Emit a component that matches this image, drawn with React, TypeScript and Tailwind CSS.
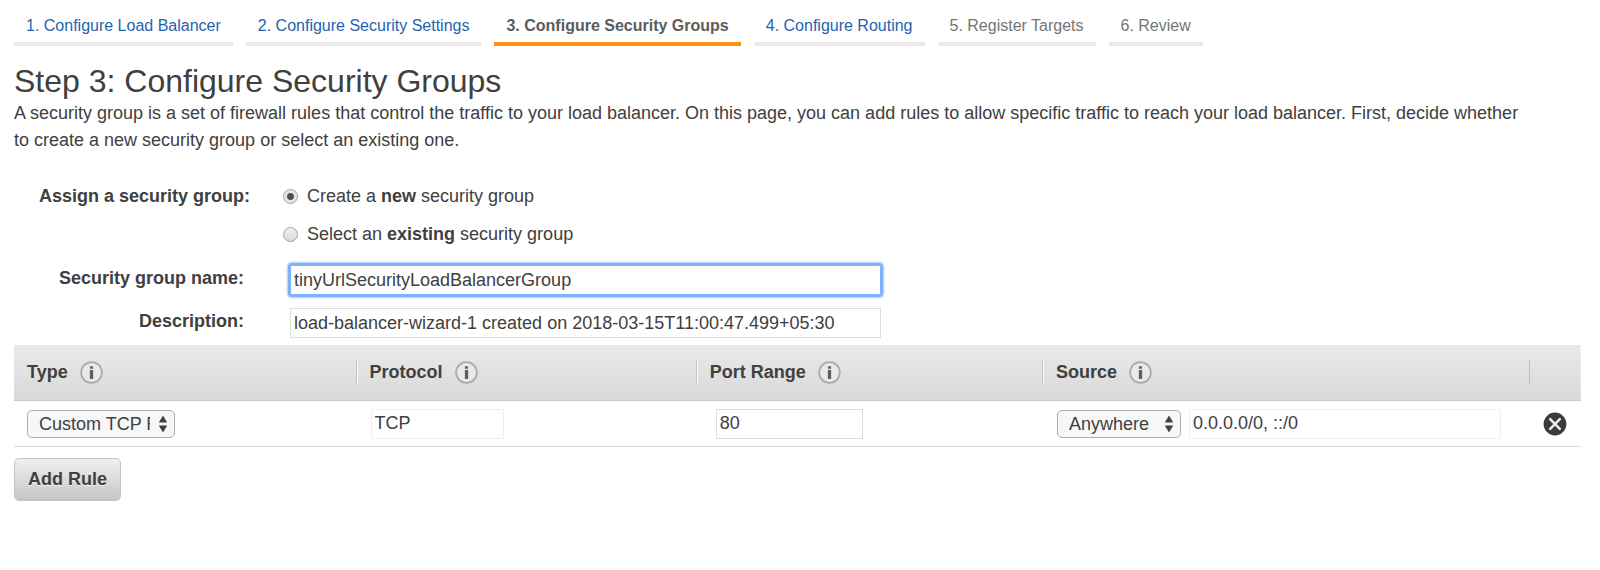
import { useState } from "react";

type Step = { label: string; state: "link" | "current" | "upcoming" };

const steps: Step[] = [
  { label: "1. Configure Load Balancer", state: "link" },
  { label: "2. Configure Security Settings", state: "link" },
  { label: "3. Configure Security Groups", state: "current" },
  { label: "4. Configure Routing", state: "link" },
  { label: "5. Register Targets", state: "upcoming" },
  { label: "6. Review", state: "upcoming" },
];

const stepStyles = {
  link: "border-[#eaeaea] text-[#1f63ad]",
  current: "border-[#ff9118] font-bold text-[#5c5c5c]",
  upcoming: "border-[#eaeaea] text-[#757575]",
};

function StepTab({ label, state }: Step) {
  const className = `border-b-4 px-3 pb-1 leading-6 ${stepStyles[state]}`;
  return (
    <li className="flex">
      {state === "link" ? (
        <a href="#" className={className}>{label}</a>
      ) : (
        <span className={className} aria-current={state === "current" ? "step" : undefined}>{label}</span>
      )}
    </li>
  );
}

function InfoButton({ label }: { label: string }) {
  return (
    <button type="button" aria-label={label} className="shrink-0">
      <svg viewBox="0 0 24 24" className="size-[23px]" aria-hidden="true">
        <circle cx="12" cy="12" r="10.8" fill="#e9e9e9" stroke="#a9a9a9" strokeWidth="1.8" />
        <rect x="10.3" y="5.4" width="3.4" height="2.8" rx="0.6" fill="#666666" />
        <rect x="10.3" y="9.4" width="3.4" height="9.4" rx="0.4" fill="#5f5f5f" />
      </svg>
    </button>
  );
}

const headCell = "border-b border-[#c9c9c9] p-0 text-left font-bold";
const bodyCell = "border-b border-[#dcdcdc] py-0";

function HeaderCell({ label, width, divider = true }: { label: string; width: string; divider?: boolean }) {
  return (
    <th scope="col" className={`${headCell} ${width}`}>
      <div className="flex h-[25px] items-center">
        {divider && <span className="h-[25px] w-0.5 shrink-0 border-l border-r border-l-[#c6c6c6] border-r-[#f6f6f6]" />}
        <span className={divider ? "flex items-center gap-3 pl-3" : "flex items-center gap-3 pl-[13px]"}>
          {label}
          <InfoButton label={`About ${label}`} />
        </span>
      </div>
    </th>
  );
}

function SelectBox({ label, options, className }: { label: string; options: string[]; className: string }) {
  return (
    <div className={`relative h-7 shrink-0 ${className}`}>
      <select
        aria-label={label}
        className="h-7 w-full appearance-none overflow-hidden rounded-[5px] border border-[#adadad] bg-[#f7f7f7] pr-6 pl-[11px] leading-6"
      >
        {options.map((option) => (
          <option key={option}>{option}</option>
        ))}
      </select>
      <svg viewBox="0 0 10 18" className="pointer-events-none absolute top-[5px] right-[7px] h-[18px] w-2.5" fill="#404040" aria-hidden="true">
        <path d="M5 0.5 9.2 7.5H0.8ZM5 17.5 9.2 10.5H0.8Z" />
      </svg>
    </div>
  );
}

const radioClass =
  "size-[15px] shrink-0 appearance-none rounded-full border border-[#a3a3a3] bg-linear-to-b from-[#f0f0f0] to-[#d9d9d9] checked:bg-[radial-gradient(circle,#505050_3px,#e6e6e6_4px)]";

export default function App() {
  const [mode, setMode] = useState("new");

  return (
    <main className="min-h-screen bg-white pt-3.5 pr-[19px] pb-8 pl-3.5 font-['Liberation_Sans',Arial,sans-serif] text-[18px] text-[#404040]">
      <nav aria-label="Wizard steps">
        <ol className="flex flex-wrap gap-[13px] text-[16px]">
          {steps.map((step) => (
            <StepTab key={step.label} {...step} />
          ))}
        </ol>
      </nav>

      <h1 className="mt-4 text-[32px] leading-[38px]">Step 3: Configure Security Groups</h1>
      <p className="pr-12 leading-[27px]">
        A security group is a set of firewall rules that control the traffic to your load balancer. On this page, you can
        add rules to allow specific traffic to reach your load balancer. First, decide whether to create a new security
        group or select an existing one.
      </p>

      <form onSubmit={(event) => event.preventDefault()}>
        <div role="radiogroup" aria-labelledby="assign-label" className="mt-[29px] flex">
          <span id="assign-label" className="w-[236px] shrink-0 text-right leading-[27px] font-bold">
            Assign a security group:
          </span>
          <div className="flex flex-col gap-[11px] pl-[33px] leading-[27px]">
            <label className="flex items-center gap-[9px]">
              <input type="radio" name="group-mode" className={radioClass} checked={mode === "new"} onChange={() => setMode("new")} />
              <span>Create a <b>new</b> security group</span>
            </label>
            <label className="flex items-center gap-[9px]">
              <input type="radio" name="group-mode" className={radioClass} checked={mode === "existing"} onChange={() => setMode("existing")} />
              <span>Select an <b>existing</b> security group</span>
            </label>
          </div>
        </div>

        <div className="mt-[17px] flex">
          <label htmlFor="group-name" className="w-[230px] shrink-0 text-right leading-[27px] font-bold">
            Security group name:
          </label>
          <input
            id="group-name"
            defaultValue="tinyUrlSecurityLoadBalancerGroup"
            className="ml-[46px] h-[30px] w-[591px] rounded-xs border border-[#7fb6fa] px-[3px] shadow-[0_0_0_2px_#7ab2fa,0_0_2px_3px_#a9cefc] outline-none"
          />
        </div>
        <div className="mt-[13px] flex">
          <label htmlFor="group-description" className="w-[230px] shrink-0 text-right leading-[27px] font-bold">
            Description:
          </label>
          <input
            id="group-description"
            defaultValue="load-balancer-wizard-1 created on 2018-03-15T11:00:47.499+05:30"
            className="ml-[46px] h-[30px] w-[591px] border border-[#dedede] px-[3px]"
          />
        </div>

        <table className="mt-[7px] w-full table-fixed border-separate border-spacing-0">
          <thead>
            <tr className="h-14 bg-linear-to-b from-[#eaeaea] to-[#d8d8d8]">
              <HeaderCell label="Type" width="w-[21.8%]" divider={false} />
              <HeaderCell label="Protocol" width="w-[21.7%]" />
              <HeaderCell label="Port Range" width="w-[22.1%]" />
              <HeaderCell label="Source" width="w-[31.1%]" />
              <th className={headCell}>
                <span className="block h-[25px] border-l border-[#bebebe]" />
              </th>
            </tr>
          </thead>
          <tbody>
            <tr className="h-[46px]">
              <td className={`${bodyCell} pl-[13px]`}>
                <SelectBox label="Type" options={["Custom TCP Rule", "HTTP", "HTTPS"]} className="w-[148px]" />
              </td>
              <td className={`${bodyCell} pl-[15px]`}>
                <input aria-label="Protocol" readOnly defaultValue="TCP" className="block h-[30px] w-[133px] border border-[#eeeeee] px-[3px]" />
              </td>
              <td className={`${bodyCell} pl-5`}>
                <input aria-label="Port Range" defaultValue="80" className="block h-[30px] w-[147px] border border-[#dedede] px-[3px]" />
              </td>
              <td className={`${bodyCell} pr-7 pl-[15px]`}>
                <div className="flex items-center gap-2">
                  <SelectBox label="Source" options={["Anywhere", "Custom", "My IP"]} className="w-[124px]" />
                  <input aria-label="Source addresses" readOnly defaultValue="0.0.0.0/0, ::/0" className="h-[30px] min-w-0 flex-1 border border-[#eeeeee] px-[3px]" />
                </div>
              </td>
              <td className={`${bodyCell} pl-3.5`}>
                <button type="button" aria-label="Remove rule" className="block">
                  <svg viewBox="0 0 24 24" className="size-6" aria-hidden="true">
                    <circle cx="12" cy="12" r="11.4" fill="#3b3b3b" />
                    <path d="m7.2 7.2 9.6 9.6m0-9.6-9.6 9.6" stroke="#ececec" strokeWidth="2.5" strokeLinecap="round" />
                  </svg>
                </button>
              </td>
            </tr>
          </tbody>
        </table>

        <button
          type="button"
          className="mt-[11px] h-[43px] rounded-[5px] border border-[#c4c4c4] bg-linear-to-b from-[#f0f0f0] to-[#c6c6c6] px-[13px] font-bold text-shadow-[0_1px_0_#f4f4f4]"
        >
          Add Rule
        </button>
      </form>
    </main>
  );
}
